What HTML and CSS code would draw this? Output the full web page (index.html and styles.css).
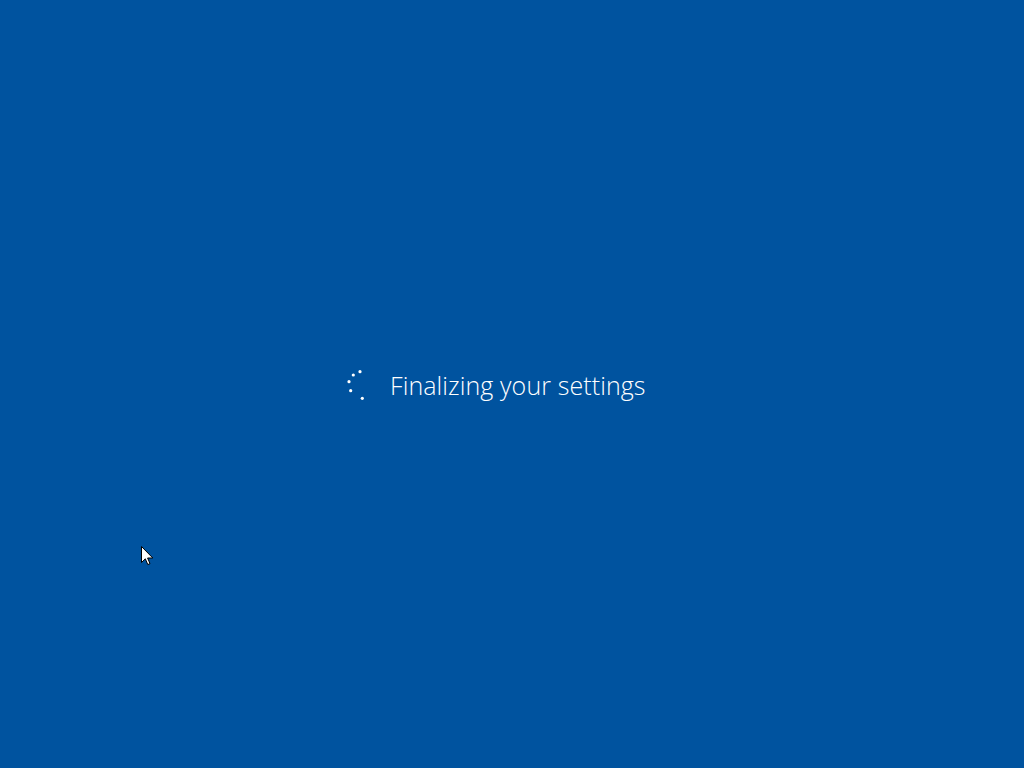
FILE: index.html
```html
<!DOCTYPE html>
<html lang="en">
<head>
<meta charset="utf-8">
<title>Finalizing your settings</title>
<link rel="stylesheet" href="styles.css">
</head>
<body>
<main class="screen">
  <div class="status">
    <svg class="spinner" width="22" height="32" viewBox="0 0 22 32" aria-hidden="true">
      <circle cx="15" cy="2.7" r="1.6"/>
      <circle cx="8.3" cy="6" r="1.6"/>
      <circle cx="4" cy="12.7" r="1.6"/>
      <circle cx="5.7" cy="21.7" r="1.6"/>
      <circle cx="17.3" cy="29.3" r="1.6"/>
    </svg>
    <span class="message">Finalizing your settings</span>
  </div>
  <svg class="cursor" width="13" height="20" viewBox="0 0 13 20" aria-hidden="true">
    <path d="M0.5 0.5 L0.5 16.5 L4.3 12.8 L6.8 18.6 L9 17.6 L6.6 12 L11.8 12 Z" fill="#fff" stroke="#000" stroke-width="1" stroke-linejoin="miter"/>
  </svg>
</main>
</body>
</html>
```
FILE: styles.css
```css
html, body {
  margin: 0;
  padding: 0;
  width: 100%;
  height: 100%;
  background: #00539f;
  overflow: hidden;
}
.screen {
  position: relative;
  width: 1024px;
  height: 768px;
  box-sizing: border-box;
  padding-top: 368px;
  padding-left: 345px;
  font-family: "Open Sans", "Noto Sans", "Liberation Sans", sans-serif;
}
.status {
  display: flex;
  align-items: center;
  gap: 23px;
  height: 34px;
}
.spinner {
  flex: none;
  display: block;
  fill: #ffffff;
}
.message {
  color: #ffffff;
  font-size: 25px;
  font-weight: 300;
  line-height: 34px;
  letter-spacing: 0.1px;
  white-space: nowrap;
}
.cursor {
  position: absolute;
  left: 141px;
  top: 546px;
}
```
